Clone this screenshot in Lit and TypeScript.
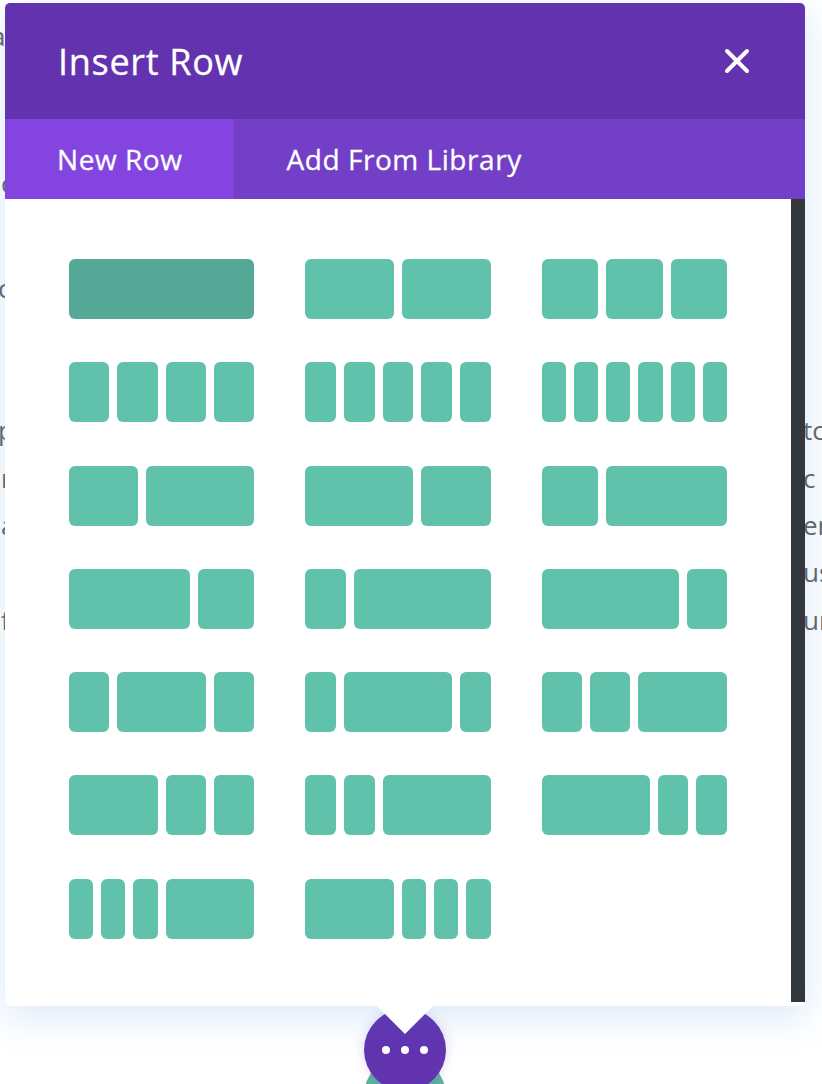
import { LitElement, html, css } from "lit";
import { customElement } from "lit/decorators.js";

const S = 1 / 6, T = 1 / 3, Q = 1 / 4, F = 1 / 5, H = 1 / 2;
const LAYOUTS: number[][] = [
  [1], [H, H], [T, T, T],
  [Q, Q, Q, Q], [F, F, F, F, F], [S, S, S, S, S, S],
  [0.4, 0.6], [0.6, 0.4], [T, 2 * T],
  [2 * T, T], [Q, 3 * Q], [3 * Q, Q],
  [Q, H, Q], [F, 0.6, F], [Q, Q, H],
  [H, Q, Q], [F, F, 0.6], [0.6, F, F],
  [S, S, S, H], [H, S, S, S],
];

// gap class, left fragment, how far it hangs off the page, right fragment
const BACK: [string, string, string, string][] = [
  ["p1", "a", "far", ""],
  ["p2", "c", "in", ""],
  ["p3", "c", "edge", ""],
  ["p4", "p", "edge", "tc"],
  ["", "r", "in", "c"],
  ["", "a", "in", "er"],
  ["", "", "", "us"],
  ["", "f", "in", "ur"],
];

@customElement("app-root")
export class AppRoot extends LitElement {
  static styles = css`
    :host {
      display: block;
      position: relative;
      width: 822px;
      height: 1084px;
      overflow: hidden;
      background: #fff;
      font-family: "Open Sans", sans-serif;
    }
    .page {
      color: #666;
      font-size: 26px;
      line-height: 47.4px;
    }
    .line {
      display: flex;
      justify-content: space-between;
      height: 47.4px;
    }
    .l.far { margin-left: -9px; }
    .l.edge { margin-left: -2px; }
    .l.in { margin-left: 1px; }
    .r {
      width: 19px;
      margin-left: auto;
      white-space: nowrap;
    }
    .p1 { padding-top: 13px; }
    .p2 { margin-top: 100px; }
    .p3 { margin-top: 57px; }
    .p4 { margin-top: 95px; }
    .modal {
      position: absolute;
      left: 5px;
      top: 3px;
      width: 800px;
      height: 1003px;
      display: flex;
      flex-direction: column;
      background: #fff;
      border-radius: 5px;
      box-shadow: 0 10px 40px rgba(43, 135, 218, 0.19);
      z-index: 2;
    }
    .head {
      flex: none;
      height: 116px;
      box-sizing: border-box;
      padding: 0 53px;
      display: flex;
      align-items: center;
      justify-content: space-between;
      background: #6332ae;
      border-radius: 5px 5px 0 0;
      color: #fff;
      font-size: 36px;
      font-weight: 400;
      letter-spacing: 0.7px;
      -webkit-text-stroke: 0.3px #fff;
    }
    .close { display: block; margin-right: 2px; }
    .tabs {
      flex: none;
      height: 80px;
      display: flex;
      background: #723fc6;
      color: #fff;
      font-size: 28px;
      font-weight: 400;
      letter-spacing: 0.55px;
      -webkit-text-stroke: 0.3px #fff;
    }
    .tab {
      display: flex;
      align-items: center;
      padding: 0 52px;
    }
    .tab.on { background: #8344e0; }
    .body {
      flex: 1;
      display: flex;
      min-height: 0;
    }
    .grid {
      flex: 1;
      box-sizing: border-box;
      padding: 60px 64px 0;
      display: grid;
      grid-template-columns: repeat(3, 1fr);
      grid-auto-rows: 60px;
      column-gap: 51px;
      row-gap: 43.25px;
      align-content: start;
    }
    .bar {
      flex: none;
      width: 14px;
      margin-bottom: 4px;
      background: #33383d;
    }
    .layout {
      display: flex;
      gap: 8px;
      margin-right: -8px;
      min-width: 0;
    }
    .cell {
      flex: none;
      width: calc(var(--f) * 100% - 8px);
      height: 60px;
      border-radius: 6px;
      background: #61c2ab;
    }
    .layout.first .cell { background: #56a896; }
    .beak {
      position: absolute;
      left: 377px;
      top: 1006px;
      width: 56px;
      height: 28px;
      background: #fff;
      clip-path: polygon(0 0, 100% 0, 50% 100%);
      z-index: 3;
    }
    .dots {
      position: absolute;
      left: 364px;
      top: 1009px;
      width: 82px;
      height: 82px;
      border-radius: 50%;
      background: #6234b0;
      box-shadow: 0 0 12px rgba(98, 52, 176, 0.2);
      display: flex;
      align-items: center;
      justify-content: center;
      gap: 11px;
      z-index: 1;
    }
    .dots i {
      width: 8px;
      height: 8px;
      border-radius: 50%;
      background: #fff;
    }
    .add {
      position: absolute;
      left: 364px;
      top: 1055px;
      width: 82px;
      height: 82px;
      border-radius: 50%;
      background: #5cb3a0;
    }
  `;

  render() {
    return html`
      <div class="page">
        ${BACK.map(
          ([cls, l, hang, r]) => html`<div class="line ${cls}">
            <span class="l ${hang}">${l}</span><span class="r">${r}</span>
          </div>`
        )}
      </div>
      <div class="add"></div>
      <div class="dots"><i></i><i></i><i></i></div>
      <div class="beak"></div>
      <div class="modal">
        <div class="head">
          <span>Insert Row</span>
          <svg class="close" width="26" height="26" viewBox="0 0 26 26" fill="none" stroke="#fff" stroke-width="4" stroke-linecap="round">
            <path d="M3 3 23 23M23 3 3 23" />
          </svg>
        </div>
        <div class="tabs">
          <div class="tab on">New Row</div>
          <div class="tab">Add From Library</div>
        </div>
        <div class="body">
          <div class="grid">
            ${LAYOUTS.map(
              (cols, i) => html`<div class="layout ${i === 0 ? "first" : ""}">
                ${cols.map((f) => html`<div class="cell" style="--f:${f}"></div>`)}
              </div>`
            )}
          </div>
          <div class="bar"></div>
        </div>
      </div>
    `;
  }
}
